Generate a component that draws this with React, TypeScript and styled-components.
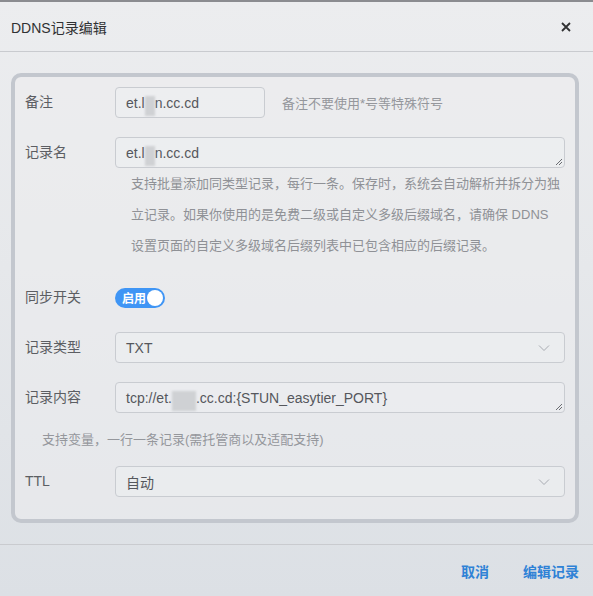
import React from 'react';
import styled, { createGlobalStyle } from 'styled-components';

const GlobalStyle = createGlobalStyle`
  html, body {
    margin: 0;
    padding: 0;
  }
  body {
    font-family: "Liberation Sans", "Noto Sans CJK SC", sans-serif;
    background: linear-gradient(180deg, #ecedef 0%, #e6e8eb 45%, #dce0e5 100%);
  }
`;

const Dialog = styled.div`
  width: 593px;
  height: 596px;
  box-sizing: border-box;
  border-top: 2px solid #8b8c90;
  display: flex;
  flex-direction: column;
`;

const Header = styled.div`
  height: 50px;
  display: flex;
  align-items: center;
  justify-content: space-between;
  padding: 0 22px 0 11px;
  border-bottom: 1px solid #c9cbcf;
  box-sizing: border-box;
`;

const Title = styled.span`
  font-size: 14px;
  color: #303133;
`;

const Body = styled.div`
  padding: 21px 14px 21px 11px;
  border-bottom: 1px solid #c9cbcf;
`;

const Panel = styled.div`
  border: 4px solid #c3c7ce;
  border-radius: 10px;
  padding: 10px 10px 22px 10px;
  background: rgba(236, 237, 239, 0.55);
`;

const Row = styled.div<{ $gap?: number }>`
  display: flex;
  align-items: flex-start;
  margin-bottom: ${(p) => p.$gap ?? 19}px;
`;

const Label = styled.div`
  width: 90px;
  flex-shrink: 0;
  height: 31px;
  line-height: 31px;
  font-size: 14px;
  color: #5c5e63;
`;

const Field = styled.div`
  flex: 1;
  display: flex;
  flex-direction: column;
`;

const Inline = styled.div`
  display: flex;
  align-items: center;
`;

const Box = styled.div<{ $width?: number }>`
  position: relative;
  box-sizing: border-box;
  height: 31px;
  width: ${(p) => (p.$width ? `${p.$width}px` : '100%')};
  border: 1px solid #c9ccd1;
  border-radius: 4px;
  padding: 0 10px;
  display: flex;
  align-items: center;
  font-size: 14px;
  color: #55575c;
  background: rgba(238, 239, 241, 0.5);
`;

const Blur = styled.span<{ $w: number }>`
  display: inline-block;
  width: ${(p) => p.$w}px;
  height: 20px;
  margin-bottom: -6px;
  background: #cfd1d4;
  filter: blur(1px);
`;

const Hint = styled.span`
  margin-left: 17px;
  font-size: 13px;
  color: #95979c;
`;

const Help = styled.div`
  padding-left: 16px;
  font-size: 13px;
  line-height: 31px;
  color: #8f9196;
`;

const Note = styled.div`
  padding: 17px 0 16px 17px;
  font-size: 13px;
  line-height: 20px;
  color: #95979c;
`;

const Resize = styled.svg`
  position: absolute;
  right: 1px;
  bottom: 1px;
`;

const Chevron = styled.svg`
  margin-left: auto;
  margin-right: 4px;
`;

const SwitchWrap = styled.div`
  height: 31px;
  display: flex;
  align-items: center;
`;

const Switch = styled.div`
  width: 50px;
  height: 20px;
  border-radius: 10px;
  background: #3f95f5;
  display: flex;
  align-items: center;
  justify-content: space-between;
  padding: 0 2px 0 7px;
  box-sizing: border-box;
`;

const SwitchText = styled.span`
  font-size: 12px;
  font-weight: bold;
  color: #ffffff;
`;

const Knob = styled.span`
  width: 16px;
  height: 16px;
  border-radius: 50%;
  background: #ffffff;
`;

const Footer = styled.div`
  flex: 1;
  display: flex;
  align-items: center;
  justify-content: flex-end;
  gap: 34px;
  padding: 0 14px 0 0;
`;

const TextButton = styled.button`
  border: none;
  background: none;
  padding: 0;
  font-family: inherit;
  font-size: 14px;
  font-weight: bold;
  color: #2f82d6;
  cursor: pointer;
`;

function ResizeHandle() {
  return (
    <Resize width="9" height="9" viewBox="0 0 9 9">
      <path d="M8 2 L2 8 M8 5 L5 8" stroke="#6b6d72" strokeWidth="1" />
    </Resize>
  );
}

function Arrow() {
  return (
    <Chevron width="12" height="8" viewBox="0 0 12 8">
      <path d="M1 1.5 L6 6.5 L11 1.5" fill="none" stroke="#a8abb2" strokeWidth="1" />
    </Chevron>
  );
}

function App() {
  return (
    <>
      <GlobalStyle />
      <Dialog>
        <Header>
          <Title>DDNS记录编辑</Title>
          <svg width="10" height="10" viewBox="0 0 10 10">
            <path d="M1 1 L9 9 M9 1 L1 9" stroke="#303133" strokeWidth="1.8" />
          </svg>
        </Header>
        <Body>
          <Panel>
            <Row>
              <Label>备注</Label>
              <Inline>
                <Box $width={150}>
                  et.l<Blur $w={10} />n.cc.cd
                </Box>
                <Hint>备注不要使用*号等特殊符号</Hint>
              </Inline>
            </Row>
            <Row $gap={21}>
              <Label>记录名</Label>
              <Field>
                <Box>
                  et.l<Blur $w={10} />n.cc.cd
                  <ResizeHandle />
                </Box>
                <Help>
                  支持批量添加同类型记录，每行一条。保存时，系统会自动解析并拆分为独立记录。如果你使用的是免费二级或自定义多级后缀域名，请确保 DDNS
                  设置页面的自定义多级域名后缀列表中已包含相应的后缀记录。
                </Help>
              </Field>
            </Row>
            <Row>
              <Label>同步开关</Label>
              <SwitchWrap>
                <Switch>
                  <SwitchText>启用</SwitchText>
                  <Knob />
                </Switch>
              </SwitchWrap>
            </Row>
            <Row>
              <Label>记录类型</Label>
              <Field>
                <Box>
                  TXT
                  <Arrow />
                </Box>
              </Field>
            </Row>
            <Row $gap={0}>
              <Label>记录内容</Label>
              <Field>
                <Box>
                  tcp://et.<Blur $w={24} />.cc.cd:{'{STUN_easytier_PORT}'}
                  <ResizeHandle />
                </Box>
              </Field>
            </Row>
            <Note>支持变量，一行一条记录(需托管商以及适配支持)</Note>
            <Row $gap={0}>
              <Label>TTL</Label>
              <Field>
                <Box>
                  自动
                  <Arrow />
                </Box>
              </Field>
            </Row>
          </Panel>
        </Body>
        <Footer>
          <TextButton>取消</TextButton>
          <TextButton>编辑记录</TextButton>
        </Footer>
      </Dialog>
    </>
  );
}

export default App;
